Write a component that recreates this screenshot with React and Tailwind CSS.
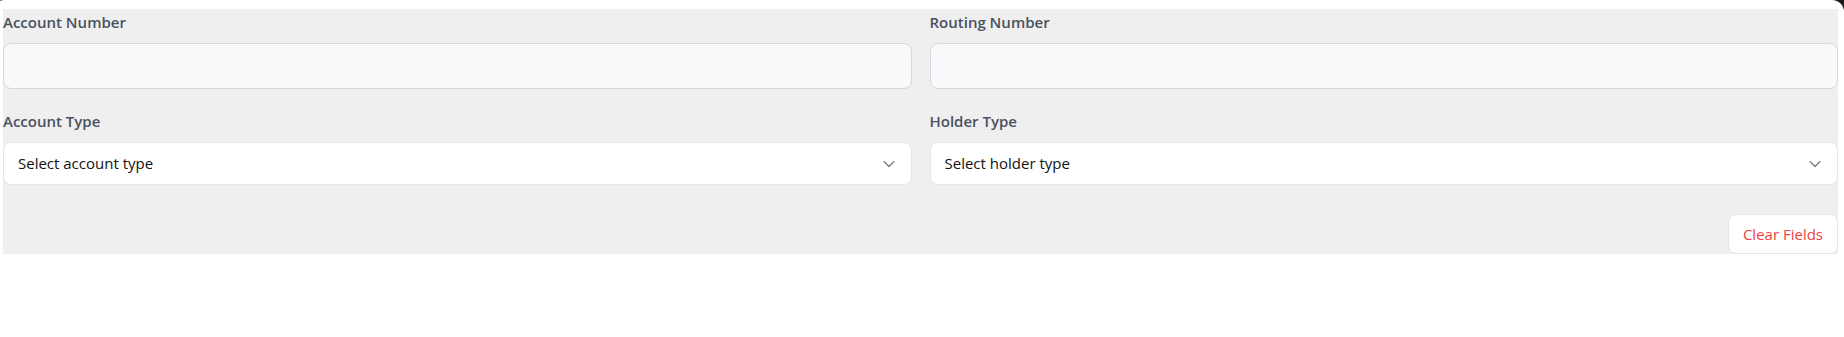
import React from "react";
import { ChevronDown } from "lucide-react";

function Field({ label, children }) {
  return (
    <div className="flex flex-col">
      <label className="mb-[10px] pt-[2px] text-[15px] leading-[22px] font-semibold text-[#4a5160]">{label}</label>
      {children}
    </div>
  );
}

function TextInput() {
  return (
    <input
      type="text"
      className="h-[46px] w-full rounded-lg border border-[#d4d6dc] bg-[#f8f9fb] px-4 text-[15px] outline-none"
    />
  );
}

function SelectBox({ placeholder }) {
  return (
    <button
      type="button"
      className="flex h-[43px] w-full items-center justify-between rounded-lg border border-[#e6e6e8] bg-white pl-[14px] pr-3 text-left text-[15px] text-[#111111]"
    >
      <span>{placeholder}</span>
      <ChevronDown size={20} strokeWidth={1.5} className="text-[#7a7d85]" />
    </button>
  );
}

export default function App() {
  return (
    <div className="flex min-h-[337px] flex-col bg-[#1a1a1a]" style={{ fontFamily: '"Open Sans", "Noto Sans", sans-serif' }}>
      <div className="-ml-2 flex-1 rounded-t-xl bg-white pl-[11px] pr-[6px] pt-[9px]">
        <div className="bg-[#efefef]">
          <div className="grid grid-cols-2 gap-x-[18px] gap-y-[19px]">
            <Field label="Account Number">
              <TextInput />
            </Field>
            <Field label="Routing Number">
              <TextInput />
            </Field>
            <Field label="Account Type">
              <SelectBox placeholder="Select account type" />
            </Field>
            <Field label="Holder Type">
              <SelectBox placeholder="Select holder type" />
            </Field>
          </div>
          <div className="mt-[29px] flex justify-end">
            <button
              type="button"
              className="h-[40px] rounded-lg border border-[#e6e6e8] bg-white px-[14px] text-[15px] text-[#ef4444]"
            >
              Clear Fields
            </button>
          </div>
        </div>
      </div>
    </div>
  );
}
